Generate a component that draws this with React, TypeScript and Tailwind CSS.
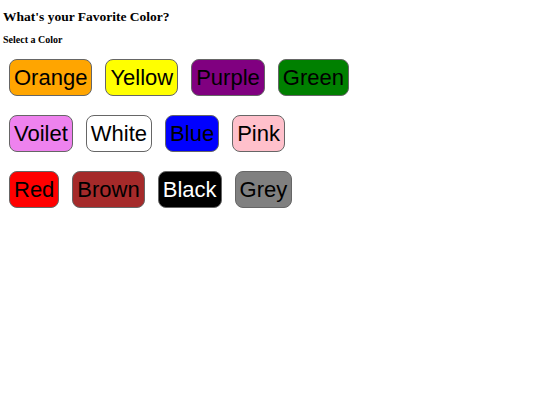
const colors: { name: string; bg: string; text: string }[][] = [
  [
    { name: "Orange", bg: "bg-[#ffa500]", text: "text-black" },
    { name: "Yellow", bg: "bg-[#ffff00]", text: "text-black" },
    { name: "Purple", bg: "bg-[#800080]", text: "text-black" },
    { name: "Green", bg: "bg-[#008000]", text: "text-black" },
  ],
  [
    { name: "Voilet", bg: "bg-[#ee82ee]", text: "text-black" },
    { name: "White", bg: "bg-white", text: "text-black" },
    { name: "Blue", bg: "bg-[#0000ff]", text: "text-black" },
    { name: "Pink", bg: "bg-[#ffc0cb]", text: "text-black" },
  ],
  [
    { name: "Red", bg: "bg-[#ff0000]", text: "text-black" },
    { name: "Brown", bg: "bg-[#a52a2a]", text: "text-black" },
    { name: "Black", bg: "bg-black", text: "text-white" },
    { name: "Grey", bg: "bg-[#808080]", text: "text-black" },
  ],
];

export default function App() {
  return (
    <div className="min-h-[405px] w-[540px] bg-white px-[3px] pt-[8px]">
      <h3 className="font-['Liberation_Serif',serif] text-[13.5px] font-bold leading-[18px] text-black">
        What's your Favorite Color?
      </h3>
      <h5 className="mt-[8px] font-['Liberation_Serif',serif] text-[10px] font-bold leading-[12px] text-black">
        Select a Color
      </h5>
      <div className="mt-[13px] flex flex-col gap-[19px] pl-[6px]">
        {colors.map((row, i) => (
          <div key={i} className="flex gap-[13px]">
            {row.map((c) => (
              <button
                key={c.name}
                className={`h-[37px] rounded-[8px] border border-[#666] px-[4px] font-['Liberation_Sans',Arial,sans-serif] text-[22px] leading-none ${c.bg} ${c.text}`}
              >
                {c.name}
              </button>
            ))}
          </div>
        ))}
      </div>
    </div>
  );
}
